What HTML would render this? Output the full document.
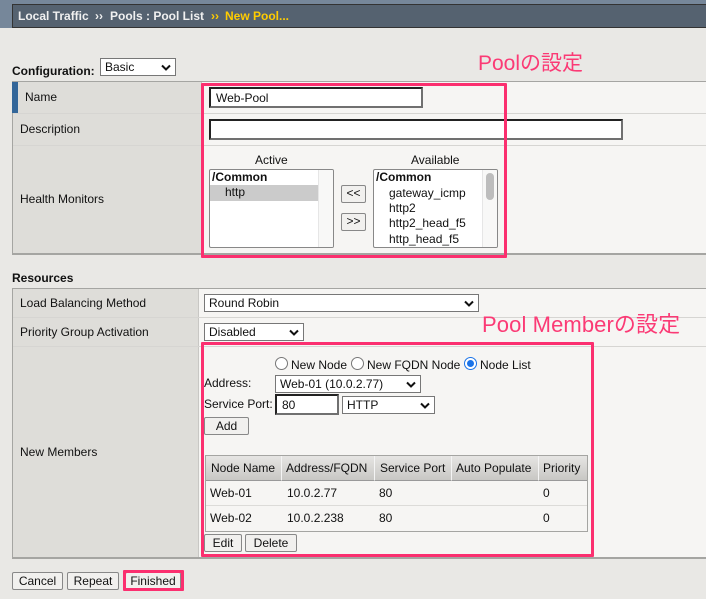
<!DOCTYPE html>
<html><head><meta charset="utf-8"><style>
html,body{margin:0;padding:0}
body{width:706px;height:599px;overflow:hidden;position:relative;background:#e9e8e5;font-family:"Liberation Sans",sans-serif;font-size:12px;color:#111}
.a{position:absolute;box-sizing:border-box}
.t{position:absolute;white-space:nowrap;line-height:14px}
.b{font-weight:bold}
.sel{position:absolute;box-sizing:border-box;background:#fff;border:1px solid #777;height:18px;line-height:17px;padding-left:4px;white-space:nowrap}
.sel svg{position:absolute;top:5px;right:4px}
.btn{position:absolute;box-sizing:border-box;background:#f1f0ee;border:1px solid #888;border-radius:2px;height:18px;line-height:16px;text-align:center;white-space:nowrap}
.inp{position:absolute;box-sizing:border-box;background:#fff;border:2px solid;border-color:#222 #707070 #707070 #222}
.pk{position:absolute;box-sizing:border-box;border:3px solid #fb2f6f;border-radius:1px}
.lb{position:absolute;box-sizing:border-box;background:#fff;border:1px solid #888;border-radius:2px;overflow:hidden}
.th{position:absolute;top:0;height:25px;line-height:24px;text-align:left;background:linear-gradient(#e6e5e3,#c8c7c4);border-right:1px solid #f4f4f4;border-bottom:1px solid #999;box-sizing:border-box;white-space:nowrap}
.pt{position:absolute;color:#fb3a75;font-family:"Liberation Sans","Noto Sans CJK JP",sans-serif;line-height:24px;white-space:nowrap}
.r{position:absolute;box-sizing:border-box;width:13px;height:13px;border-radius:50%;background:#fff;border:1px solid #777}
</style></head><body>
<div class="a" style="left:0;top:0;width:706px;height:28px;background:#76879a"></div>
<div class="a" style="left:12px;top:4px;width:694px;height:24px;background:#556270;border:1px solid #333;border-right:0"></div>
<div class="t b" style="left:18px;top:9px;color:#f0f0f0">Local Traffic</div>
<div class="t b" style="left:95px;top:9px;color:#f0f0f0">››</div>
<div class="t b" style="left:110px;top:9px;color:#f0f0f0">Pools : Pool List</div>
<div class="t b" style="left:211px;top:9px;color:#fc0">››</div>
<div class="t b" style="left:225px;top:9px;color:#fc0">New Pool...</div>

<div class="t b" style="left:12px;top:64px">Configuration:</div>
<div class="sel" style="left:100px;top:58px;width:76px;height:18px">Basic<svg width="10" height="8"><path d="M1 1.5 5 5.5 9 1.5" fill="none" stroke="#111" stroke-width="2"/></svg></div>

<div class="a" style="left:12px;top:81px;width:694px;height:174px;background:#f6f5f3;border-top:1px solid #a5a5a2;border-bottom:2px solid #a5a5a2;border-left:1px solid #a5a5a2"></div>
<div class="a" style="left:13px;top:82px;width:189px;height:171px;background:#deddd9;border-right:1px solid #c8c7c4"></div>
<div class="a" style="left:12px;top:82px;width:6px;height:31px;background:#336699"></div>
<div class="a" style="left:13px;top:113px;width:693px;height:1px;background:#d6d5d2"></div>
<div class="a" style="left:13px;top:145px;width:693px;height:1px;background:#d6d5d2"></div>
<div class="t" style="left:25px;top:90px">Name</div>
<div class="t" style="left:20px;top:122px">Description</div>
<div class="t" style="left:20px;top:192px">Health Monitors</div>

<div class="inp" style="left:209px;top:87px;width:214px;height:21px"></div>
<div class="t" style="left:216px;top:91px">Web-Pool</div>
<div class="inp" style="left:209px;top:119px;width:414px;height:21px"></div>

<div class="t" style="left:255px;top:153px">Active</div>
<div class="lb" style="left:209px;top:169px;width:125px;height:79px">
<div class="a" style="left:108px;top:0;width:15px;height:77px;background:#f8f8f7;border-left:1px solid #e6e6e6"></div>
<div class="t b" style="left:2px;top:0">/Common</div>
<div class="a" style="left:0;top:15px;width:108px;height:16px;background:#cbcbcb"></div>
<div class="t" style="left:15px;top:15px">http</div>
</div>

<div class="btn" style="left:341px;top:185px;width:25px;height:18px;line-height:15px">&lt;&lt;</div>
<div class="btn" style="left:341px;top:213px;width:25px;height:18px;line-height:15px">&gt;&gt;</div>

<div class="t" style="left:411px;top:153px">Available</div>
<div class="lb" style="left:373px;top:169px;width:125px;height:79px">
<div class="a" style="left:108px;top:0;width:15px;height:77px;background:#f8f8f7;border-left:1px solid #e6e6e6"></div>
<div class="a" style="left:112px;top:3px;width:8px;height:27px;background:#bdbdbd;border-radius:4px"></div>
<div class="t b" style="left:2px;top:0">/Common</div>
<div class="t" style="left:15px;top:16px">gateway_icmp</div>
<div class="t" style="left:15px;top:31px">http2</div>
<div class="t" style="left:15px;top:46px">http2_head_f5</div>
<div class="t" style="left:15px;top:62px">http_head_f5</div>
</div>

<div class="t b" style="left:12px;top:271px">Resources</div>
<div class="a" style="left:12px;top:288px;width:694px;height:271px;background:#f6f5f3;border-top:1px solid #a5a5a2;border-bottom:2px solid #a5a5a2;border-left:1px solid #a5a5a2"></div>
<div class="a" style="left:13px;top:289px;width:186px;height:268px;background:#deddd9;border-right:1px solid #c8c7c4"></div>
<div class="a" style="left:13px;top:317px;width:693px;height:1px;background:#d6d5d2"></div>
<div class="a" style="left:13px;top:346px;width:693px;height:1px;background:#d6d5d2"></div>
<div class="t" style="left:20px;top:296px">Load Balancing Method</div>
<div class="t" style="left:20px;top:325px">Priority Group Activation</div>
<div class="t" style="left:20px;top:445px">New Members</div>

<div class="sel" style="left:204px;top:294px;width:275px;height:18px">Round Robin<svg width="10" height="8"><path d="M1 1.5 5 5.5 9 1.5" fill="none" stroke="#111" stroke-width="2"/></svg></div>
<div class="sel" style="left:204px;top:323px;width:100px;height:18px">Disabled<svg width="10" height="8"><path d="M1 1.5 5 5.5 9 1.5" fill="none" stroke="#111" stroke-width="2"/></svg></div>

<div class="r" style="left:275px;top:357px"></div>
<div class="t" style="left:291px;top:358px">New Node</div>
<div class="r" style="left:351px;top:357px"></div>
<div class="t" style="left:367px;top:358px">New FQDN Node</div>
<div class="r" style="left:464px;top:357px;border:1px solid #1a73e8"><div class="a" style="left:2px;top:2px;width:7px;height:7px;border-radius:50%;background:#1a73e8"></div></div>
<div class="t" style="left:480px;top:358px">Node List</div>

<div class="t" style="left:204px;top:376px">Address:</div>
<div class="sel" style="left:275px;top:375px;width:146px;height:18px">Web-01 (10.0.2.77)<svg width="10" height="8"><path d="M1 1.5 5 5.5 9 1.5" fill="none" stroke="#111" stroke-width="2"/></svg></div>
<div class="t" style="left:204px;top:397px">Service Port:</div>
<div class="inp" style="left:275px;top:394px;width:64px;height:21px"></div>
<div class="t" style="left:282px;top:398px">80</div>
<div class="sel" style="left:342px;top:396px;width:93px;height:18px">HTTP<svg width="10" height="8"><path d="M1 1.5 5 5.5 9 1.5" fill="none" stroke="#111" stroke-width="2"/></svg></div>
<div class="btn" style="left:204px;top:417px;width:45px;height:18px">Add</div>

<div class="a" style="left:205px;top:455px;width:383px;height:77px;border:1px solid #a5a5a2;background:#f6f5f3"></div>
<div class="th" style="left:206px;top:456px;width:76px;padding-left:5px">Node Name</div>
<div class="th" style="left:282px;top:456px;width:93px;padding-left:4px">Address/FQDN</div>
<div class="th" style="left:375px;top:456px;width:77px;padding-left:5px">Service Port</div>
<div class="th" style="left:452px;top:456px;width:87px;padding-left:4px">Auto Populate</div>
<div class="th" style="left:539px;top:456px;width:48px;padding-left:4px;border-right:0">Priority</div>
<div class="a" style="left:206px;top:505px;width:381px;height:1px;background:#dcdbd8"></div>
<div class="t" style="left:210px;top:486px">Web-01</div>
<div class="t" style="left:287px;top:486px">10.0.2.77</div>
<div class="t" style="left:379px;top:486px">80</div>
<div class="t" style="left:543px;top:486px">0</div>
<div class="t" style="left:210px;top:511px">Web-02</div>
<div class="t" style="left:287px;top:511px">10.0.2.238</div>
<div class="t" style="left:379px;top:511px">80</div>
<div class="t" style="left:543px;top:511px">0</div>
<div class="btn" style="left:204px;top:534px;width:38px;height:18px">Edit</div>
<div class="btn" style="left:245px;top:534px;width:52px;height:18px">Delete</div>

<div class="btn" style="left:12px;top:572px;width:51px;height:18px">Cancel</div>
<div class="btn" style="left:67px;top:572px;width:52px;height:18px">Repeat</div>
<div class="btn" style="left:125px;top:572px;width:56px;height:18px">Finished</div>

<div class="pk" style="left:201px;top:83px;width:306px;height:175px"></div>
<div class="pk" style="left:201px;top:342px;width:393px;height:215px"></div>
<div class="pk" style="left:123px;top:570px;width:61px;height:21px"></div>
<div class="pt" style="left:478px;top:52px;font-size:21px">Poolの設定</div>
<div class="pt" style="left:482px;top:313px;font-size:22px;letter-spacing:.1px">Pool Memberの設定</div>
</body></html>
